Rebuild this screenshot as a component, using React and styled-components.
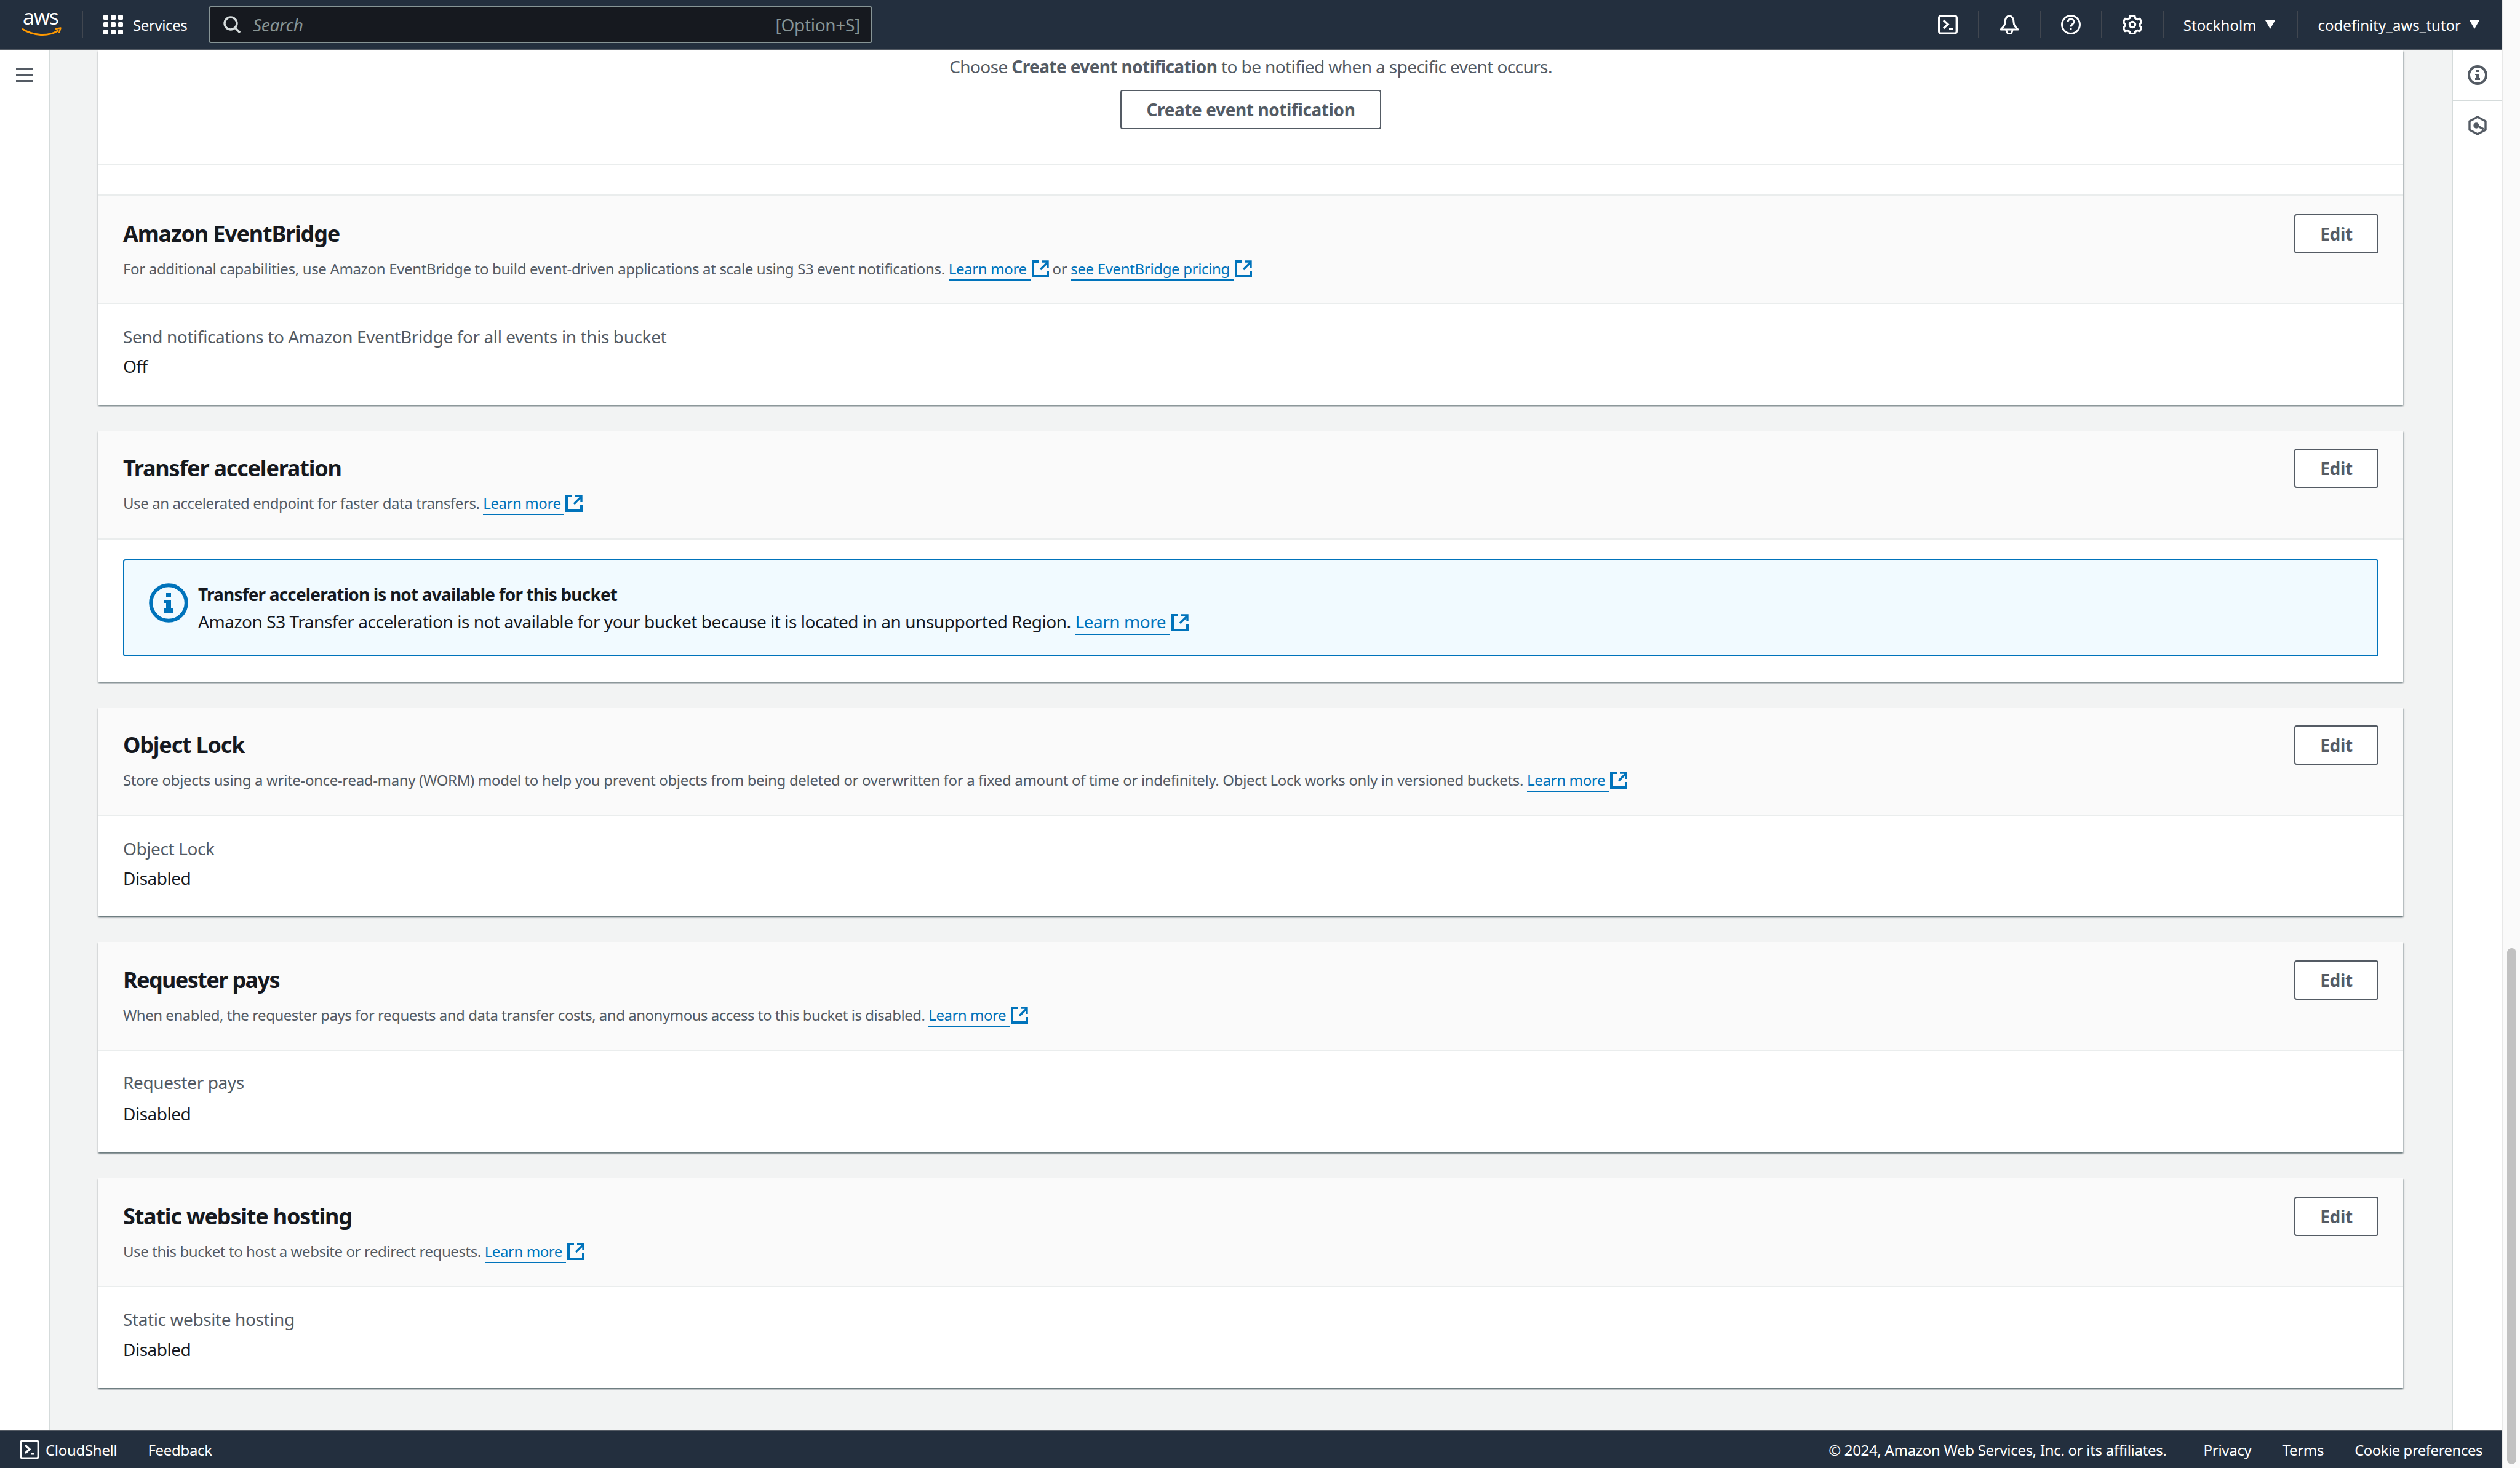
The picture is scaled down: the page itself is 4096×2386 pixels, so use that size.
import React from "react";
import styled, { createGlobalStyle } from "styled-components";

const GlobalStyle = createGlobalStyle`
  html, body {
    margin: 0;
    padding: 0;
    background: #f2f3f3;
    overflow: hidden;
  }
  * {
    box-sizing: border-box;
  }
`;

const Page = styled.div`
  display: flex;
  width: 4096px;
  height: 2386px;
  overflow: hidden;
  font-family: "Noto Sans", "Open Sans", sans-serif;
  color: #16191f;
`;

const Main = styled.div`
  display: flex;
  flex-direction: column;
  width: 4066px;
  height: 100%;
`;

const TopBar = styled.header`
  display: flex;
  align-items: center;
  flex: none;
  height: 82px;
  background: #232f3e;
  border-bottom: 2px solid #545b64;
  color: #fff;
  font-size: 24px;
`;

const LogoWrap = styled.div`
  display: flex;
  align-items: center;
  width: 133px;
  height: 80px;
  padding-left: 34px;
`;

const ServicesButton = styled.div`
  display: flex;
  align-items: center;
  gap: 16px;
  width: 206px;
  height: 44px;
  padding-left: 33px;
  border-left: 2px solid #414750;
  letter-spacing: -0.4px;
`;

const SearchBox = styled.div`
  display: flex;
  align-items: center;
  width: 1079px;
  height: 60px;
  padding: 0 18px 0 22px;
  background: #16191f;
  border: 2px solid #879596;
  border-radius: 4px;
  color: #879596;
  font-size: 28px;
  letter-spacing: -0.3px;
`;

const SearchText = styled.span`
  margin-left: 20px;
  font-style: italic;
`;

const Shortcut = styled.span`
  margin-left: auto;
`;

const NavRight = styled.div`
  display: flex;
  align-items: center;
  margin-left: auto;
  padding-right: 36px;
`;

const NavItem = styled.div`
  display: flex;
  align-items: center;
  gap: 14px;
  height: 44px;
  padding: ${({ $pad }) => $pad || "0 33px"};
  border-left: ${({ $first }) => ($first ? "none" : "2px solid #414750")};
  white-space: nowrap;
`;

const Caret = styled.span`
  width: 0;
  height: 0;
  border-left: 8px solid transparent;
  border-right: 8px solid transparent;
  border-top: 14px solid #fff;
`;

const Body = styled.div`
  display: flex;
  flex: 1;
  min-height: 0;
`;

const LeftRail = styled.aside`
  flex: none;
  width: 82px;
  padding: 28px 0 0 26px;
  background: #fff;
  border-right: 2px solid #d5dbdb;
`;

const Hamburger = styled.div`
  display: flex;
  flex-direction: column;
  gap: 6px;
  width: 28px;
  & > span {
    height: 4px;
    background: #545b64;
  }
`;

const Content = styled.main`
  flex: 1;
  min-width: 0;
  display: flex;
  flex-direction: column;
  gap: 42px;
  padding: 0 79px 0 78px;
  overflow: hidden;
`;

const RightRail = styled.aside`
  flex: none;
  width: 81px;
  background: #fff;
  border-left: 2px solid #d5dbdb;
`;

const RailButton = styled.div`
  display: flex;
  justify-content: center;
  padding: 24px 0 24px;
  border-bottom: ${({ $line }) => ($line ? "2px solid #d5dbdb" : "none")};
`;

const Card = styled.section`
  flex: none;
  background: #fff;
  box-shadow: 0 2px 2px 0 rgba(0, 28, 36, 0.45), 2px 2px 2px 0 rgba(0, 28, 36, 0.12),
    -2px 2px 2px 0 rgba(0, 28, 36, 0.12);
`;

const NotifyBlock = styled.div`
  display: flex;
  flex-direction: column;
  align-items: center;
  height: 186px;
  padding-top: 6px;
  border-bottom: 2px solid #eaeded;
  color: #545b64;
  font-size: 28px;
  line-height: 40px;
  letter-spacing: -0.6px;
  b {
    font-weight: 700;
  }
`;

const Spacer = styled.div`
  height: 48px;
`;

const Header = styled.div`
  height: ${({ $line }) => ($line ? 178 : 177)}px;
  padding: ${({ $top }) => $top}px 40px 0;
  background: #fafafa;
  border-top: ${({ $line }) => ($line ? "2px solid #eaeded" : "none")};
  border-bottom: 2px solid #eaeded;
`;

const TitleRow = styled.div`
  display: flex;
  align-items: center;
  justify-content: space-between;
  height: 64px;
`;

const Title = styled.h2`
  margin: 0;
  font-size: 36px;
  line-height: 44px;
  font-weight: 700;
  color: #16191f;
  letter-spacing: ${({ $ls }) => $ls || -1.2}px;
`;

const Button = styled.button`
  display: block;
  width: 137px;
  height: 64px;
  padding: 0;
  background: #fff;
  border: 2px solid #545b64;
  border-radius: 4px;
  color: #545b64;
  font-family: inherit;
  font-size: 28px;
  font-weight: 700;
  letter-spacing: -0.4px;
`;

const CreateButton = styled(Button)`
  width: 424px;
  margin-top: 18px;
`;

const Description = styled.p`
  margin: 9px 0 0;
  font-size: 24px;
  line-height: 32px;
  color: #545b64;
  letter-spacing: ${({ $ls }) => $ls}px;
`;

const Link = styled.a`
  color: #0073bb;
  border-bottom: 2px solid #0073bb;
  padding-bottom: 1px;
`;

const ExternalIcon = styled.svg`
  width: 28px;
  height: 28px;
  margin-left: 2px;
  vertical-align: -5px;
`;

const Field = styled.div`
  height: ${({ $h }) => $h}px;
  padding: ${({ $top }) => $top}px 40px 0;
`;

const Label = styled.div`
  font-size: 28px;
  line-height: 40px;
  color: #545b64;
  letter-spacing: -0.4px;
`;

const Value = styled.div`
  margin-top: ${({ $gap }) => $gap || 8}px;
  font-size: 28px;
  line-height: 40px;
  color: #16191f;
  letter-spacing: -0.5px;
`;

const AlertWrap = styled.div`
  height: 231px;
  padding: 32px 40px 0;
`;

const Alert = styled.div`
  display: flex;
  height: 158px;
  padding: 33px 0 0 40px;
  background: #f1faff;
  border: 2px solid #0073bb;
  border-radius: 4px;
  font-size: 28px;
  line-height: 44px;
  letter-spacing: -0.46px;
`;

const AlertIcon = styled.svg`
  flex: none;
  width: 64px;
  height: 64px;
  margin: 4px 16px 0 0;
`;

const AlertTitle = styled.div`
  font-weight: 700;
  letter-spacing: -0.82px;
`;

const Footer = styled.footer`
  display: flex;
  align-items: center;
  flex: none;
  height: 62px;
  padding: 0 31px 0 32px;
  background: #232f3e;
  border-top: 2px solid #545b64;
  color: #fff;
  font-size: 24px;
  letter-spacing: -0.3px;
`;

const FooterLink = styled.span`
  margin-left: ${({ $gap }) => $gap}px;
`;

const FooterRight = styled.div`
  display: flex;
  margin-left: auto;
  & > span:last-child {
    letter-spacing: -0.5px;
  }
`;

const Scrollbar = styled.div`
  flex: none;
  position: relative;
  width: 30px;
  background: #fafafa;
  border-left: 2px solid #e8e8e8;
`;

const Thumb = styled.div`
  position: absolute;
  left: 7px;
  top: 1541px;
  width: 15px;
  height: 839px;
  background: #c1c1c1;
  border-radius: 8px;
`;

const External = () => (
  <ExternalIcon viewBox="0 0 28 28" fill="none" stroke="#0073bb" strokeWidth="4">
    <path d="M11 2H2v24h24v-9" />
    <path d="M14 15 26 3M16 2h10v10" strokeWidth="3.4" />
  </ExternalIcon>
);

const TerminalIcon = () => (
  <svg width="32" height="32" viewBox="0 0 32 32" fill="none" stroke="#fff" strokeWidth="3.4">
    <rect x="1.7" y="1.7" width="28.600" height="28.600" rx="3" />
    <path d="m9 9 7 6.500-7 6.500" />
    <path d="M18 23h6" strokeWidth="3" />
  </svg>
);

function Section({ title, children, line, top, ls, titleLs }) {
  return (
    <Header $line={line} $top={top}>
      <TitleRow>
        <Title $ls={titleLs}>{title}</Title>
        <Button>Edit</Button>
      </TitleRow>
      <Description $ls={ls}>{children}</Description>
    </Header>
  );
}

function App() {
  return (
    <>
      <GlobalStyle />
      <Page>
        <Main>
          <TopBar>
            <LogoWrap>
              <svg width="68" height="80" viewBox="0 0 68 80" fill="none">
                <text x="3" y="40" fill="#fff" fontFamily="Open Sans" fontSize="34" textLength="59">aws</text>
                <path d="M3 47.500C20 58 44 60 60 50" stroke="#f90" strokeWidth="3" strokeLinecap="round" />
                <path d="M56 47l8.500-1.500-2.500 8" stroke="#f90" strokeWidth="2.500" strokeLinejoin="round" />
              </svg>
            </LogoWrap>
            <ServicesButton>
              <svg width="32" height="32" viewBox="0 0 32 32" fill="#fff">
                {[0, 12, 24].map((y) =>
                  [0, 12, 24].map((x) => <rect key={`${x}-${y}`} x={x} y={y} width="8" height="8" rx="1.500" />)
                )}
              </svg>
              Services
            </ServicesButton>
            <SearchBox>
              <svg width="28" height="28" viewBox="0 0 28 28" fill="none" stroke="#d5dbdb" strokeWidth="3.400">
                <circle cx="12" cy="12" r="10" />
                <path d="m19 19 8 8" />
              </svg>
              <SearchText>Search</SearchText>
              <Shortcut>[Option+S]</Shortcut>
            </SearchBox>
            <NavRight>
              <NavItem $first>
                <TerminalIcon />
              </NavItem>
              <NavItem>
                <svg width="32" height="32" viewBox="0 0 32 32" fill="none" stroke="#fff" strokeWidth="3" strokeLinejoin="round">
                  <path d="M16 1c-5 2-7 6-7 11 0 5-3 8-7 12h28c-4-4-7-7-7-12 0-5-2-9-7-11Z" />
                  <path d="M11 24c0 4 2 7 5 7s5-3 5-7" />
                </svg>
              </NavItem>
              <NavItem>
                <svg width="32" height="32" viewBox="0 0 32 32" fill="none" stroke="#fff" strokeWidth="3">
                  <circle cx="16" cy="16" r="14.500" />
                  <path d="M11 12c0-3 2-5 5-5s5 2 5 4.500c0 4-5 4-5 8" />
                  <path d="M16 22v3" />
                </svg>
              </NavItem>
              <NavItem>
                <svg width="32" height="32" viewBox="0 0 32 32" fill="none" stroke="#fff" strokeWidth="3.400" strokeLinejoin="round">
                  <path d="M12.500 1.500h7l1 4 3.500 2 4-1 3 5.500-3 3v3l3 3-3 5.500-4-1-3.500 2-1 4h-7l-1-4-3.500-2-4 1-3-5.500 3-3v-3l-3-3 3-5.500 4 1 3.500-2Z" />
                  <circle cx="16" cy="16" r="4.500" />
                </svg>
              </NavItem>
              <NavItem $pad="0 35px 0 32px">
                Stockholm <Caret />
              </NavItem>
              <NavItem $pad="0 0 0 33px">
                codefinity_aws_tutor <Caret />
              </NavItem>
            </NavRight>
          </TopBar>

          <Body>
            <LeftRail>
              <Hamburger>
                <span />
                <span />
                <span />
              </Hamburger>
            </LeftRail>

            <Content>
              <Card>
                <NotifyBlock>
                  <span>
                    Choose <b>Create event notification</b> to be notified when a specific event occurs.
                  </span>
                  <CreateButton>Create event notification</CreateButton>
                </NotifyBlock>
                <Spacer />
                <Section title="Amazon EventBridge" line top={30} ls={-0.34}>
                  For additional capabilities, use Amazon EventBridge to build event-driven applications at scale using S3
                  event notifications. <Link>Learn more </Link>
                  <External /> or <Link>see EventBridge pricing </Link>
                  <External />
                </Section>
                <Field $h={164} $top={33}>
                  <Label>Send notifications to Amazon EventBridge for all events in this bucket</Label>
                  <Value>Off</Value>
                </Field>
              </Card>

              <Card>
                <Section title="Transfer acceleration" top={29} ls={-0.42}>
                  Use an accelerated endpoint for faster data transfers. <Link>Learn more </Link>
                  <External />
                </Section>
                <AlertWrap>
                  <Alert>
                    <AlertIcon viewBox="0 0 16 16">
                      <circle cx="8" cy="8" r="7.200" fill="none" stroke="#0073bb" strokeWidth="1.500" />
                      <path fill="#0073bb" d="M7 4h2v1.700H7zM6 7h3v3h1v2H6v-2h1V8H6z" />
                    </AlertIcon>
                    <div>
                      <AlertTitle>Transfer acceleration is not available for this bucket</AlertTitle>
                      <div>
                        Amazon S3 Transfer acceleration is not available for your bucket because it is located in an
                        unsupported Region. <Link>Learn more </Link>
                        <External />
                      </div>
                    </div>
                  </Alert>
                </AlertWrap>
              </Card>

              <Card>
                <Section title="Object Lock" top={29} ls={-0.34}>
                  Store objects using a write-once-read-many (WORM) model to help you prevent objects from being deleted or
                  overwritten for a fixed amount of time or indefinitely. Object Lock works only in versioned buckets.{" "}
                  <Link>Learn more </Link>
                  <External />
                </Section>
                <Field $h={162} $top={32}>
                  <Label>Object Lock</Label>
                  <Value>Disabled</Value>
                </Field>
              </Card>

              <Card>
                <Section title="Requester pays" top={30} ls={-0.48} titleLs={-1.6}>
                  When enabled, the requester pays for requests and data transfer costs, and anonymous access to this bucket
                  is disabled. <Link>Learn more </Link>
                  <External />
                </Section>
                <Field $h={165} $top={31}>
                  <Label>Requester pays</Label>
                  <Value $gap={11}>Disabled</Value>
                </Field>
              </Card>

              <Card>
                <Section title="Static website hosting" top={30} ls={-0.42}>
                  Use this bucket to host a website or redirect requests. <Link>Learn more </Link>
                  <External />
                </Section>
                <Field $h={164} $top={32}>
                  <Label>Static website hosting</Label>
                  <Value $gap={9}>Disabled</Value>
                </Field>
              </Card>
            </Content>

            <RightRail>
              <RailButton $line>
                <svg width="32" height="32" viewBox="0 0 16 16">
                  <circle cx="8" cy="8" r="7" fill="none" stroke="#545b64" strokeWidth="2" />
                  <path fill="#545b64" d="M7 3.500h2v2H7zM6 7h3v3h1v2H6v-2h1V8H6z" />
                </svg>
              </RailButton>
              <RailButton>
                <svg width="32" height="32" viewBox="0 0 32 32" fill="none" stroke="#545b64" strokeWidth="3.400" strokeLinejoin="round">
                  <path d="M16 2 29 9v14l-13 7-13-7V9Z" />
                  <circle cx="14" cy="16" r="3" fill="#545b64" />
                  <path d="m15 16 11 6" />
                </svg>
              </RailButton>
            </RightRail>
          </Body>

          <Footer>
            <TerminalIcon />
            <FooterLink $gap={10}>CloudShell</FooterLink>
            <FooterLink $gap={50}>Feedback</FooterLink>
            <FooterRight>
              <span>© 2024, Amazon Web Services, Inc. or its affiliates.</span>
              <FooterLink $gap={60}>Privacy</FooterLink>
              <FooterLink $gap={50}>Terms</FooterLink>
              <FooterLink $gap={50}>Cookie preferences</FooterLink>
            </FooterRight>
          </Footer>
        </Main>
        <Scrollbar>
          <Thumb />
        </Scrollbar>
      </Page>
    </>
  );
}

export default App;
